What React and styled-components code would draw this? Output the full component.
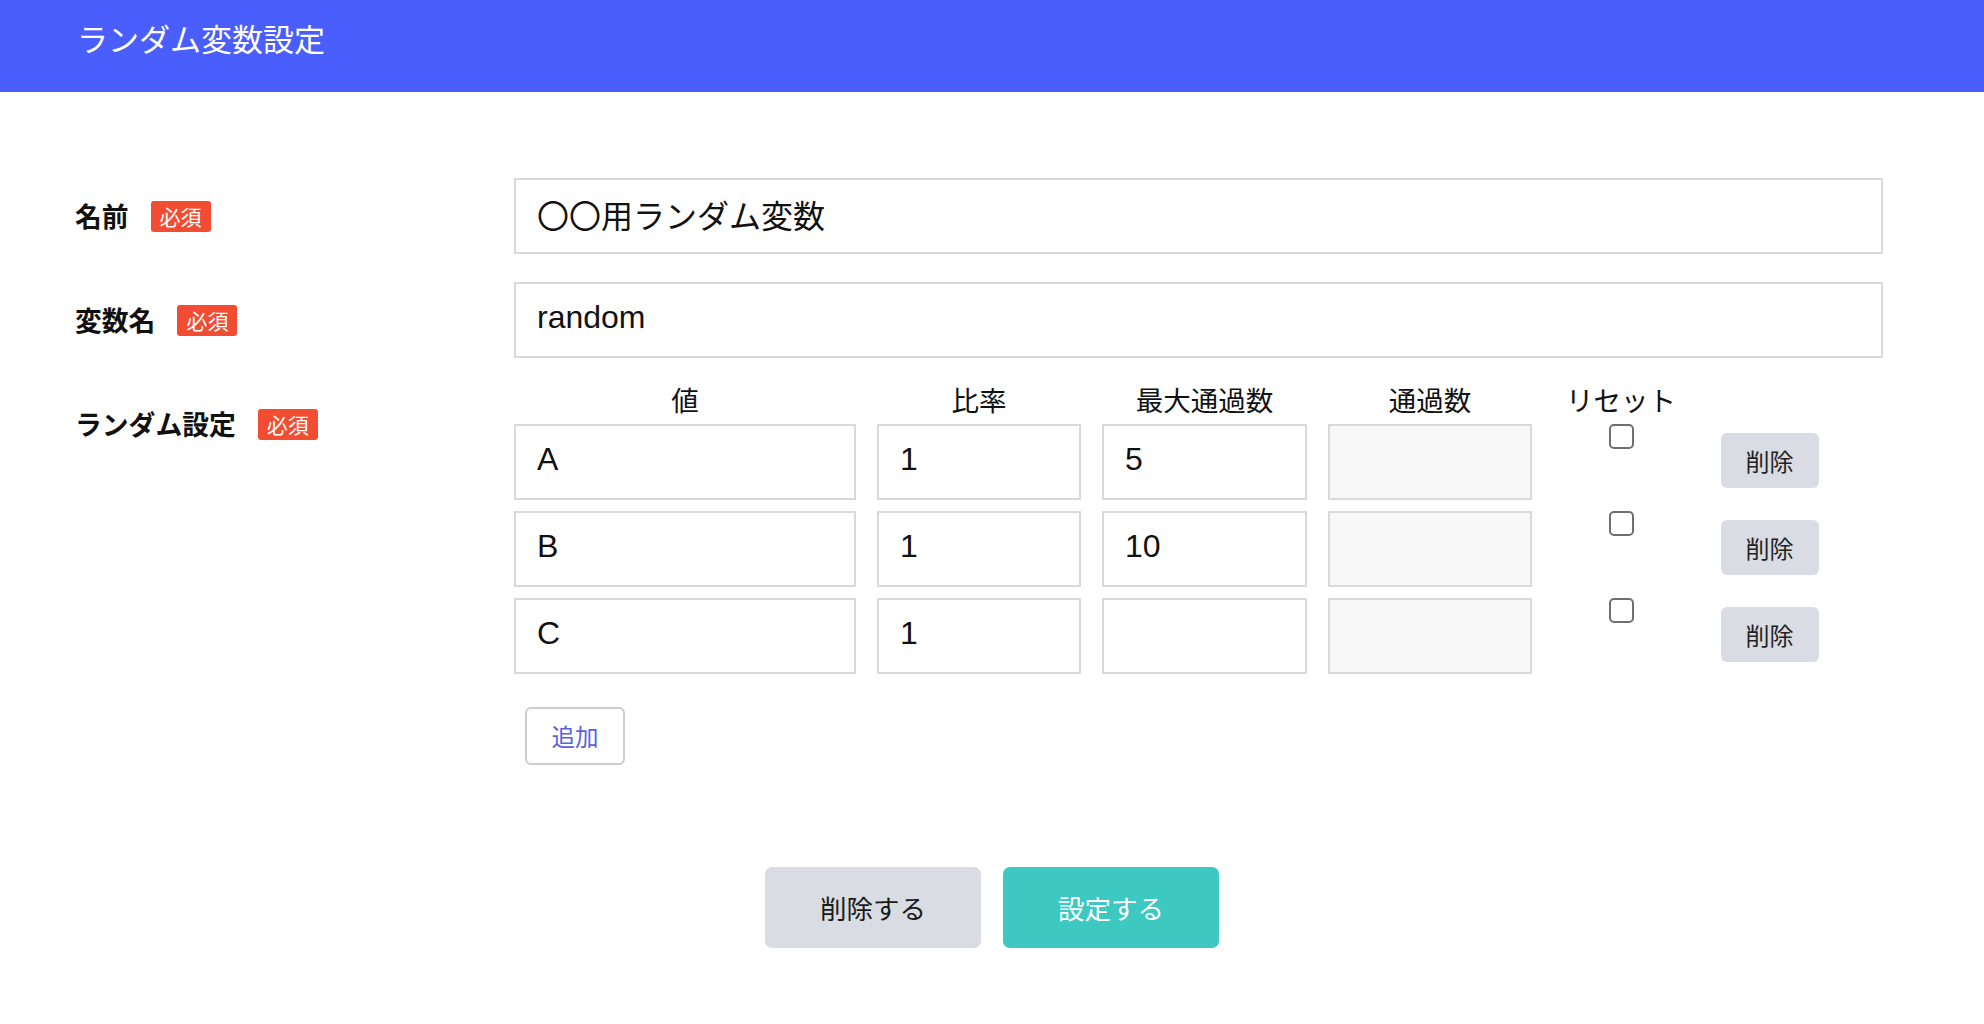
import React from "react";
import styled, { createGlobalStyle } from "styled-components";

const GlobalStyle = createGlobalStyle`
  html, body {
    margin: 0;
    padding: 0;
    background: #ffffff;
  }
  body {
    font-family: "Liberation Sans", "Noto Sans CJK JP", sans-serif;
    color: #111111;
  }
  * { box-sizing: border-box; }
`;

const TopBar = styled.header`
  height: 92px;
  background: #4a5dfd;
  padding: 16px 77px 0;
`;

const Title = styled.h1`
  margin: 0;
  font-family: "Noto Sans CJK JP", sans-serif;
  font-weight: 400;
  font-size: 31px;
  line-height: 44px;
  color: #ffffff;
`;

const Main = styled.main`
  padding: 86px 101px 0 75px;
`;

const FormRow = styled.div`
  display: flex;
  align-items: flex-start;
  margin-bottom: 28px;
`;

const LabelCell = styled.div`
  width: 439px;
  height: 76px;
  flex: none;
  display: flex;
  align-items: center;
  gap: 22px;
`;

const LabelText = styled.span`
  font-family: "Noto Sans CJK JP", sans-serif;
  font-weight: 700;
  font-size: 26.8px;
  line-height: 1;
`;

const Badge = styled.span`
  display: inline-flex;
  align-items: center;
  justify-content: center;
  height: 31px;
  padding: 0 9px;
  background: #f24c32;
  color: #ffffff;
  border-radius: 3px;
  font-family: "Noto Sans CJK JP", sans-serif;
  font-size: 21px;
  line-height: 1;
`;

const Field = styled.div`
  flex: 1;
  min-width: 0;
`;

const TextInput = styled.input`
  display: block;
  width: 100%;
  height: 76px;
  margin: 0;
  padding: 0 21px 5px;
  border: 2px solid #d9d9d9;
  border-radius: 0;
  background: ${(p) => (p.disabled ? "#f8f8f8" : "#ffffff")};
  font-family: "Liberation Sans", "Noto Sans CJK JP", sans-serif;
  font-size: 32px;
  color: #111111;
  outline: none;
`;

const Table = styled.div`
  display: grid;
  grid-template-columns: 342px 204px 205px 204px 136px 119px;
  column-gap: 21px;
  row-gap: 11px;
  align-items: center;
`;

const HeadCell = styled.div`
  text-align: center;
  font-family: "Noto Sans CJK JP", sans-serif;
  font-size: 27.5px;
  line-height: 27px;
  height: 27px;
  white-space: nowrap;
`;

const CheckCell = styled.div`
  align-self: start;
  justify-self: center;
  height: 76px;
`;

const Check = styled.input.attrs({ type: "checkbox" })`
  appearance: none;
  -webkit-appearance: none;
  display: block;
  width: 25px;
  height: 25px;
  margin: 0;
  border: 2px solid #6f6f6f;
  border-radius: 5px;
  background: #ffffff;
`;

const SmallButton = styled.button`
  align-self: start;
  justify-self: center;
  margin-top: 9px;
  width: 98px;
  height: 55px;
  border: none;
  border-radius: 6px;
  background: #d9dce3;
  color: #222222;
  font-family: "Noto Sans CJK JP", sans-serif;
  font-size: 24px;
  padding: 0;
`;

const AddButton = styled.button`
  display: block;
  margin: 33px 0 0 11px;
  width: 100px;
  height: 58px;
  border: 2px solid #cdcdcd;
  border-radius: 6px;
  background: #ffffff;
  color: #5763de;
  font-family: "Noto Sans CJK JP", sans-serif;
  font-size: 23.5px;
  padding: 0;
`;

const Footer = styled.div`
  display: flex;
  justify-content: center;
  gap: 22px;
  margin-top: 102px;
`;

const ActionButton = styled.button`
  width: 216px;
  height: 81px;
  border: none;
  border-radius: 7px;
  background: ${(p) => (p.$primary ? "#3dc8c1" : "#d9dce3")};
  color: ${(p) => (p.$primary ? "#ffffff" : "#1a1a1a")};
  font-family: "Noto Sans CJK JP", sans-serif;
  font-size: 26.5px;
  padding: 0;
`;

const rows = [
  { value: "A", ratio: "1", max: "5" },
  { value: "B", ratio: "1", max: "10" },
  { value: "C", ratio: "1", max: "" },
];

export default function App() {
  return (
    <>
      <GlobalStyle />
      <TopBar>
        <Title>ランダム変数設定</Title>
      </TopBar>
      <Main>
        <FormRow>
          <LabelCell>
            <LabelText>名前</LabelText>
            <Badge>必須</Badge>
          </LabelCell>
          <Field>
            <TextInput defaultValue="〇〇用ランダム変数" />
          </Field>
        </FormRow>
        <FormRow>
          <LabelCell>
            <LabelText>変数名</LabelText>
            <Badge>必須</Badge>
          </LabelCell>
          <Field>
            <TextInput defaultValue="random" />
          </Field>
        </FormRow>
        <FormRow>
          <LabelCell>
            <LabelText>ランダム設定</LabelText>
            <Badge>必須</Badge>
          </LabelCell>
          <Field>
            <Table>
              <HeadCell>値</HeadCell>
              <HeadCell>比率</HeadCell>
              <HeadCell>最大通過数</HeadCell>
              <HeadCell>通過数</HeadCell>
              <HeadCell>リセット</HeadCell>
              <HeadCell />
              {rows.map((r) => (
                <React.Fragment key={r.value}>
                  <TextInput defaultValue={r.value} />
                  <TextInput defaultValue={r.ratio} />
                  <TextInput defaultValue={r.max} />
                  <TextInput disabled />
                  <CheckCell>
                    <Check />
                  </CheckCell>
                  <SmallButton>削除</SmallButton>
                </React.Fragment>
              ))}
            </Table>
            <AddButton>追加</AddButton>
          </Field>
        </FormRow>
      </Main>
      <Footer>
        <ActionButton>削除する</ActionButton>
        <ActionButton $primary>設定する</ActionButton>
      </Footer>
    </>
  );
}
